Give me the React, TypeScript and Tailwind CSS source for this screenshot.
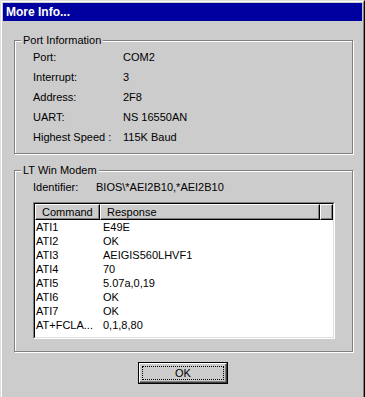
import React from 'react';

const portRows = [
  ['Port:', 'COM2'],
  ['Interrupt:', '3'],
  ['Address:', '2F8'],
  ['UART:', 'NS 16550AN'],
  ['Highest Speed :', '115K Baud'],
];

const modemRows = [
  ['ATI1', 'E49E'],
  ['ATI2', 'OK'],
  ['ATI3', 'AEIGIS560LHVF1'],
  ['ATI4', '70'],
  ['ATI5', '5.07a,0,19'],
  ['ATI6', 'OK'],
  ['ATI7', 'OK'],
  ['AT+FCLA...', '0,1,8,80'],
];

const GroupBox = ({ title, className, children }: { title: string; className: string; children: React.ReactNode }) => (
  <div className={`relative border border-[#808080] shadow-[inset_1px_1px_0_#fff,1px_1px_0_#fff] ${className}`}>
    <span className="absolute -top-[8px] left-[6px] bg-[#cccccc] px-[2px] leading-[14px]">{title}</span>
    {children}
  </div>
);

const App: React.FC = () => {
  return (
    <div className="w-[365px] h-[397px] overflow-hidden bg-[#cccccc] font-['Liberation_Sans',Arial,sans-serif] text-[11px] text-black">
      <div className="h-full border-l border-t border-[#dfdfdf] border-r border-r-black">
        <div className="h-full border-l border-t border-white border-r border-r-[#808080] p-px">
          {/* Title bar */}
          <div className="h-[18px] bg-[#0000a0] pl-[3px] flex items-center text-[12px] font-bold text-white">
            More Info...
          </div>

          <div className="pl-[11px] pt-[19px]">
            {/* Port info */}
            <GroupBox title="Port Information" className="w-[339px] h-[114px] pt-[6px] pl-[18px]">
              {portRows.map(([label, value]) => (
                <div key={label} className="flex h-[20px] items-center">
                  <span className="w-[90px]">{label}</span>
                  <span>{value}</span>
                </div>
              ))}
            </GroupBox>

            {/* Modem */}
            <GroupBox title="LT Win Modem" className="mt-[16px] w-[339px] h-[182px] pt-[6px] pl-[18px]">
              <div className="flex h-[20px] items-center">
                <span className="w-[63px]">Identifier:</span>
                <span>BIOS\*AEI2B10,*AEI2B10</span>
              </div>
              <div className="mt-[5px] w-[302px] h-[137px] border border-[#808080] border-b-white border-r-white">
                <div className="h-full border border-black border-b-[#dfdfdf] border-r-[#dfdfdf] bg-white">
                  <div className="flex h-[16px] bg-[#cccccc]">
                    <div className="w-[65px] pl-[6px] flex items-center border-l border-t border-white border-r border-r-black border-b border-b-black shadow-[inset_-1px_-1px_0_#808080]">Command</div>
                    <div className="w-[220px] pl-[6px] flex items-center border-l border-t border-white border-r border-r-black border-b border-b-black shadow-[inset_-1px_-1px_0_#808080]">Response</div>
                    <div className="flex-1 border-l border-t border-white border-r border-r-black border-b border-b-black shadow-[inset_-1px_-1px_0_#808080]"></div>
                  </div>
                  {modemRows.map(([cmd, resp]) => (
                    <div key={cmd} className="flex h-[14px] items-center">
                      <span className="w-[65px] pl-[1px]">{cmd}</span>
                      <span className="pl-[3px]">{resp}</span>
                    </div>
                  ))}
                </div>
              </div>
            </GroupBox>

            {/* OK button */}
            <div className="mt-[10px] ml-[124px] w-[90px] h-[22px] border border-black">
              <div className="h-full border border-white border-r-[#404040] border-b-[#404040] shadow-[inset_-1px_-1px_0_#808080] p-[2px]">
                <div className="h-full border border-dotted border-black flex items-center justify-center">OK</div>
              </div>
            </div>
          </div>
        </div>
      </div>
    </div>
  );
};

export default App;
